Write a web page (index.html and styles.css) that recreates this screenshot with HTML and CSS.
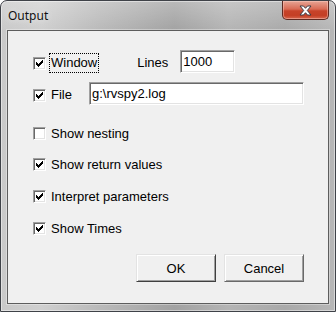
FILE: index.html
```html
<!DOCTYPE html>
<html lang="en">
<head>
    <meta charset="UTF-8">
    <title>Output</title>
    <link rel="stylesheet" href="styles.css">
</head>
<body>
    <div class="window">
        <div class="titlebar">
            <span class="title">Output</span>
            <button class="close" aria-label="Close">
                <svg width="13" height="11" viewBox="0 0 13 11">
                    <path d="M1 1 H4.5 L6.5 3.3 L8.5 1 H12 L8.3 5.5 L12 10 H8.5 L6.5 7.7 L4.5 10 H1 L4.7 5.5 Z" fill="#fff" stroke="#3c3c46" stroke-width="1" stroke-linejoin="round"/>
                </svg>
            </button>
        </div>
        <div class="client">
            <div class="row row-window">
                <label class="option focused">
                    <span class="box"><svg class="tick" width="9" height="9" viewBox="2 2 9 9"><polygon points="3,5 5,7 10,2 10,5 5,10 3,8"/></svg></span>
                    <span class="text">Window</span>
                </label>
                <span class="lines-label">Lines</span>
                <input class="edit edit-lines" type="text" value="1000">
            </div>
            <div class="row row-file">
                <label class="option">
                    <span class="box"><svg class="tick" width="9" height="9" viewBox="2 2 9 9"><polygon points="3,5 5,7 10,2 10,5 5,10 3,8"/></svg></span>
                    <span class="text">File</span>
                </label>
                <input class="edit edit-file" type="text" value="g:\rvspy2.log">
            </div>
            <div class="row check-row first">
                <label class="option">
                    <span class="box"></span>
                    <span class="text">Show nesting</span>
                </label>
            </div>
            <div class="row check-row second">
                <label class="option">
                    <span class="box"><svg class="tick" width="9" height="9" viewBox="2 2 9 9"><polygon points="3,5 5,7 10,2 10,5 5,10 3,8"/></svg></span>
                    <span class="text">Show return values</span>
                </label>
            </div>
            <div class="row check-row">
                <label class="option">
                    <span class="box"><svg class="tick" width="9" height="9" viewBox="2 2 9 9"><polygon points="3,5 5,7 10,2 10,5 5,10 3,8"/></svg></span>
                    <span class="text">Interpret parameters</span>
                </label>
            </div>
            <div class="row check-row">
                <label class="option">
                    <span class="box"><svg class="tick" width="9" height="9" viewBox="2 2 9 9"><polygon points="3,5 5,7 10,2 10,5 5,10 3,8"/></svg></span>
                    <span class="text">Show Times</span>
                </label>
            </div>
            <div class="buttons">
                <button class="button default">OK</button>
                <button class="button">Cancel</button>
            </div>
        </div>
    </div>
</body>
</html>
```

FILE: styles.css
```css
html, body {
    margin: 0;
    padding: 0;
}

body {
    width: 336px;
    height: 312px;
    font-family: "Liberation Sans", Arial, sans-serif;
    font-size: 13px;
    color: #000;
}

.window {
    box-sizing: border-box;
    width: 336px;
    height: 312px;
    border: 1px solid #3f4248;
    border-radius: 7px 7px 0 0;
    padding: 0 6px 7px 6px;
    display: flex;
    flex-direction: column;
    background:
        linear-gradient(to bottom, rgba(255,255,255,0.25), rgba(255,255,255,0) 30px),
        linear-gradient(to right, #c9c9c9 0%, #cfcfcf 12%, #b9b9b9 30%, #a2a2a2 52%, #b4b4b4 68%, #a9a9a9 85%, #b7b7b7 100%);
    box-shadow: inset 0 0 0 1px rgba(255,255,255,0.45);
}

/* title bar */
.titlebar {
    height: 29px;
    display: flex;
    justify-content: space-between;
    align-items: flex-start;
}

.title {
    font-family: "Noto Sans", "Open Sans", sans-serif;
    font-size: 12px;
    color: #111;
    padding-top: 6px;
    padding-left: 1px;
    text-shadow: 0 0 6px rgba(255,255,255,0.7);
}

.close {
    width: 47px;
    height: 19px;
    margin: 0;
    padding: 0;
    border: 1px solid #5e2a22;
    border-top: none;
    border-radius: 0 0 5px 5px;
    display: flex;
    align-items: center;
    justify-content: center;
    background: linear-gradient(to bottom, #e7a595 0%, #d96b55 45%, #c7432a 55%, #c43f25 80%, #d5664e 100%);
    box-shadow: inset 0 0 0 1px rgba(255,210,200,0.45);
}

/* dialog body */
.client {
    flex: 1;
    background-color: #f0f0f0;
    border: 1px solid #5d5d5d;
    box-shadow: 0 0 0 1px rgba(255,255,255,0.35);
    padding: 19px 24px 0 25px;
    display: flex;
    flex-direction: column;
}

.row {
    display: flex;
    align-items: center;
}

.row-window {
    height: 23px;
}

.row-file {
    height: 23px;
    margin-top: 9px;
}

.check-row {
    height: 21px;
    margin-top: 11px;
}

.check-row.first {
    margin-top: 18px;
}

.check-row.second {
    margin-top: 10px;
}

.option {
    display: flex;
    align-items: center;
    gap: 3px;
}

.row-window .option,
.row-file .option {
    margin-top: 3px;
}

.text {
    line-height: 18px;
    padding: 0 1px;
    border: 1px dotted transparent;
    white-space: nowrap;
}

.focused .text {
    border-color: #000;
}

/* classic sunken check box */
.box {
    box-sizing: border-box;
    width: 13px;
    height: 13px;
    padding: 1px;
    background: #fff;
    border: 1px solid;
    border-color: #a0a0a0 #fff #fff #a0a0a0;
    box-shadow: inset 1px 1px 0 #696969, inset -1px -1px 0 #e3e3e3;
    display: flex;
}

.tick {
    display: block;
    fill: #000;
    shape-rendering: crispEdges;
}

.lines-label {
    margin-left: 38px;
    margin-top: 1px;
}

.edit {
    box-sizing: border-box;
    height: 23px;
    margin: 0;
    padding: 0 0 0 2px;
    font-family: "Liberation Sans", Arial, sans-serif;
    font-size: 13px;
    color: #000;
    background: #fff;
    border: 1px solid;
    border-color: #a0a0a0 #fff #fff #a0a0a0;
    box-shadow: inset 1px 1px 0 #696969, inset -1px -1px 0 #e3e3e3;
    outline: none;
}

.edit-lines {
    width: 55px;
    margin-left: 12px;
}

.edit-file {
    width: 215px;
    margin-left: 15px;
}

/* buttons */
.buttons {
    display: flex;
    justify-content: flex-end;
    gap: 8px;
    margin-top: 15px;
}

.button {
    box-sizing: border-box;
    width: 80px;
    height: 28px;
    margin: 0;
    padding: 0;
    font-family: "Liberation Sans", Arial, sans-serif;
    font-size: 13px;
    color: #000;
    background: #f0f0f0;
    border: 1px solid;
    border-color: #e3e3e3 #696969 #696969 #e3e3e3;
    box-shadow: inset 1px 1px 0 #fff, inset -1px -1px 0 #a0a0a0;
}

.button.default {
    border-color: #e3e3e3 #404040 #404040 #e3e3e3;
}
```
